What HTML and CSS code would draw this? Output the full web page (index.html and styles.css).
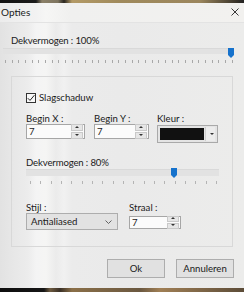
FILE: index.html
```html
<!DOCTYPE html>
<html>
<head>
<meta charset="utf-8">
<link rel="stylesheet" href="styles.css">
</head>
<body>
<div class="window">
  <div class="strip strip-top"></div>
  <div class="titlebar">
    <span class="title">Opties</span>
    <svg class="close" width="8" height="8" viewBox="0 0 8 8"><path d="M0.5 0.5 L7.5 7.5 M7.5 0.5 L0.5 7.5" stroke="#222" stroke-width="0.9" fill="none"/></svg>
  </div>
  <div class="content">
    <div class="lbl lbl-main lbl-pct">Dekvermogen : 100%</div>
    <div class="slider slider-main">
      <div class="track"></div>
      <div class="thumb"></div>
      <div class="ticks"></div>
    </div>
    <div class="group">
      <div class="check-row">
        <span class="checkbox"><svg width="10" height="10" viewBox="0 0 10 10"><path d="M1.8 5.2 L4 7.4 L8.4 2.2" stroke="#222" stroke-width="1" fill="none"/></svg></span>
        <span class="check-label">Slagschaduw</span>
      </div>
      <div class="row row-pos">
        <div class="field f-x">
          <div class="lbl">Begin X :</div>
          <div class="spin"><span class="val">7</span><span class="spin-btns"><span class="sb sb-up"></span><span class="sb sb-down"></span></span></div>
        </div>
        <div class="field f-y">
          <div class="lbl">Begin Y :</div>
          <div class="spin"><span class="val">7</span><span class="spin-btns"><span class="sb sb-up"></span><span class="sb sb-down"></span></span></div>
        </div>
        <div class="field f-color">
          <div class="lbl">Kleur :</div>
          <div class="color"><span class="swatch"></span><span class="color-arrow"></span></div>
        </div>
      </div>
      <div class="lbl lbl-op lbl-pct">Dekvermogen : 80%</div>
      <div class="slider slider-op">
        <div class="track"></div>
        <div class="thumb"></div>
        <div class="ticks"></div>
      </div>
      <div class="row row-style">
        <div class="field f-style">
          <div class="lbl">Stijl :</div>
          <div class="select"><span class="val">Antialiased</span><svg width="7" height="4" viewBox="0 0 7 4"><path d="M0.5 0.5 L3.5 3.5 L6.5 0.5" stroke="#555" stroke-width="0.9" fill="none"/></svg></div>
        </div>
        <div class="field f-radius">
          <div class="lbl">Straal :</div>
          <div class="spin"><span class="val">7</span><span class="spin-btns"><span class="sb sb-up"></span><span class="sb sb-down"></span></span></div>
        </div>
      </div>
    </div>
    <div class="buttons">
      <button class="btn btn-ok">Ok</button>
      <button class="btn btn-cancel">Annuleren</button>
    </div>
  </div>
  <div class="strip strip-bottom"></div>
</div>
</body>
</html>
```
FILE: styles.css
```css
html, body {
  margin: 0;
  padding: 0;
}
body {
  width: 244px;
  height: 292px;
  overflow: hidden;
  font-family: Lato, "Noto Sans", sans-serif;
  font-size: 9.6px;
  color: #1a1a1a;
}
.window {
  width: 244px;
  height: 292px;
  display: flex;
  flex-direction: column;
  background: linear-gradient(to right, #e2e2e2 0px, #e6e6e6 10px, #ececec 28px, #f4f4f4 36px, #f5f5f4 46px, #ebebeb 56px, #f1f1f1 64px, #ebebeb 72px, #eaeaea 120px, #ececeb 244px);
}
.strip {
  flex: none;
}
.strip-top {
  height: 3px;
  background: linear-gradient(to right, #141414 0px, #1b1b1b 36px, #8c8169 42px, #7e7560 58px, #2a2620 64px, #b39a66 72px, #a08a5c 120px, #9b865d 200px, #3a342a 236px, #222 244px);
}
.strip-bottom {
  height: 4px;
  background: linear-gradient(to right, #0e0e0e 0px, #161616 44px, #6d5a40 50px, #3a3026 60px, #8a6f48 72px, #6b5840 140px, #a07f55 160px, #5c4c38 244px);
}
.titlebar {
  flex: none;
  height: 20px;
  box-sizing: border-box;
  display: flex;
  align-items: center;
  justify-content: space-between;
  padding: 0 5px 1px 1px;
  background: linear-gradient(to right, #ececec 0px, #f2f2f2 36px, #f6f6f5 46px, #f0f0ef 70px, #f2f1ef 244px);
  border-bottom: 1px solid #e3e3e3;
}
.title {
  font-size: 10px;
  line-height: 12px;
  color: #1a1a1a;
}
.close {
  display: block;
}
.content {
  flex: 1;
  display: flex;
  flex-direction: column;
}
.lbl {
  line-height: 12px;
  height: 12px;
  white-space: nowrap;
}
.lbl-pct {
  letter-spacing: -0.15px;
}
.lbl-main {
  margin: 12px 0 0 11px;
}
.slider {
  position: relative;
  height: 16px;
}
.slider .track {
  position: absolute;
  top: 0;
  height: 6px;
  background: #e2e2e2;
  border-top: 1px solid #d9d9d9;
  box-sizing: border-box;
}
.slider .thumb {
  position: absolute;
  top: 0;
  width: 6px;
  height: 10px;
  background: #1672cc;
  clip-path: polygon(0 0, 100% 0, 100% 70%, 50% 100%, 0 70%);
}
.slider .ticks {
  position: absolute;
  top: 12px;
  height: 3px;
}
.slider-main {
  margin-top: 1px;
}
.slider-main .track {
  left: 3px;
  width: 230px;
}
.slider-main .thumb {
  left: 228px;
}
.slider-main .ticks {
  left: 5px;
  width: 229px;
  background: repeating-linear-gradient(to right, #a8a8a8 0px, #a8a8a8 1px, transparent 1px, transparent 6.67px);
}
.group {
  margin: 12px 0 0 11px;
  width: 222px;
  height: 171px;
  box-sizing: border-box;
  border: 1px solid #d8d8d8;
  padding: 16px 0 0 14px;
  display: flex;
  flex-direction: column;
}
.check-row {
  display: flex;
  align-items: center;
  height: 10px;
}
.checkbox {
  width: 10px;
  height: 10px;
  box-sizing: border-box;
  border: 1px solid #333;
  background: #f8f8f8;
  display: flex;
}
.checkbox svg {
  margin: -1px;
}
.check-label {
  margin-left: 3px;
  line-height: 12px;
}
.row {
  display: flex;
}
.row-pos {
  margin-top: 10px;
}
.field {
  display: flex;
  flex-direction: column;
}
.f-x { width: 59px; }
.f-y { width: 55px; margin-left: 9px; }
.f-color { margin-left: 8px; }
.spin {
  margin-top: -1px;
  height: 15px;
  box-sizing: border-box;
  border: 1px solid #a6a6a6;
  background: #fbfbfb;
  display: flex;
  align-items: center;
  justify-content: space-between;
}
.spin .val {
  padding-left: 2px;
  line-height: 12px;
}
.spin-btns {
  display: flex;
  flex-direction: column;
  gap: 1px;
  margin-right: 1px;
}
.sb {
  width: 10px;
  height: 5px;
  background: #e6e6e6;
  border: 1px solid #c9c9c9;
  position: relative;
}
.sb::after {
  content: "";
  position: absolute;
  left: 3px;
  width: 0;
  height: 0;
  border-left: 2px solid transparent;
  border-right: 2px solid transparent;
}
.sb-up::after {
  top: 1px;
  border-bottom: 2px solid #333;
}
.sb-down::after {
  top: 1px;
  border-top: 2px solid #333;
}
.color {
  width: 61px;
  height: 18px;
  box-sizing: border-box;
  border: 1px solid #a9a9a9;
  background: #e4e4e4;
  display: flex;
  align-items: center;
  padding: 2px;
}
.swatch {
  width: 44px;
  height: 12px;
  background: #111;
}
.color-arrow {
  flex: 1;
  height: 14px;
  margin-left: 1px;
  background: #ececec;
  border-left: 1px solid #cfcfcf;
  position: relative;
}
.color-arrow::after {
  content: "";
  position: absolute;
  left: 4px;
  top: 6px;
  border-left: 2px solid transparent;
  border-right: 2px solid transparent;
  border-top: 2px solid #333;
}
.lbl-op {
  margin-top: 14px;
}
.slider-op {
  width: 194px;
}
.slider-op .track {
  left: 0;
  width: 193px;
  height: 7px;
}
.slider-op .thumb {
  left: 145px;
  top: -1px;
}
.slider-op .ticks {
  left: 4px;
  width: 188px;
  top: 12px;
  background: repeating-linear-gradient(to right, #b4b4b4 0px, #b4b4b4 1px, transparent 1px, transparent 10.33px);
}
.row-style {
  margin-top: 17px;
}
.f-style { width: 92px; }
.f-radius { width: 52px; margin-left: 11px; }
.select {
  margin-top: -1px;
  height: 17px;
  box-sizing: border-box;
  border: 1px solid #adadad;
  background: #e2e2e2;
  display: flex;
  align-items: center;
  justify-content: space-between;
  padding: 0 5px 0 4px;
}
.select .val {
  line-height: 12px;
}
.f-radius .spin {
  margin-top: 2px;
  height: 13px;
}
.f-radius .sb {
  height: 4px;
}
.f-radius .sb-up::after,
.f-radius .sb-down::after {
  top: 0;
}
.buttons {
  display: flex;
  justify-content: flex-end;
  gap: 11px;
  margin: 12px 10px 0 0;
}
.btn {
  width: 58px;
  height: 19px;
  box-sizing: border-box;
  border: 1px solid #adadad;
  background: #e1e1e1;
  font-family: Lato, "Noto Sans", sans-serif;
  font-size: 9.6px;
  color: #1a1a1a;
  padding: 0;
  line-height: 12px;
}
```
